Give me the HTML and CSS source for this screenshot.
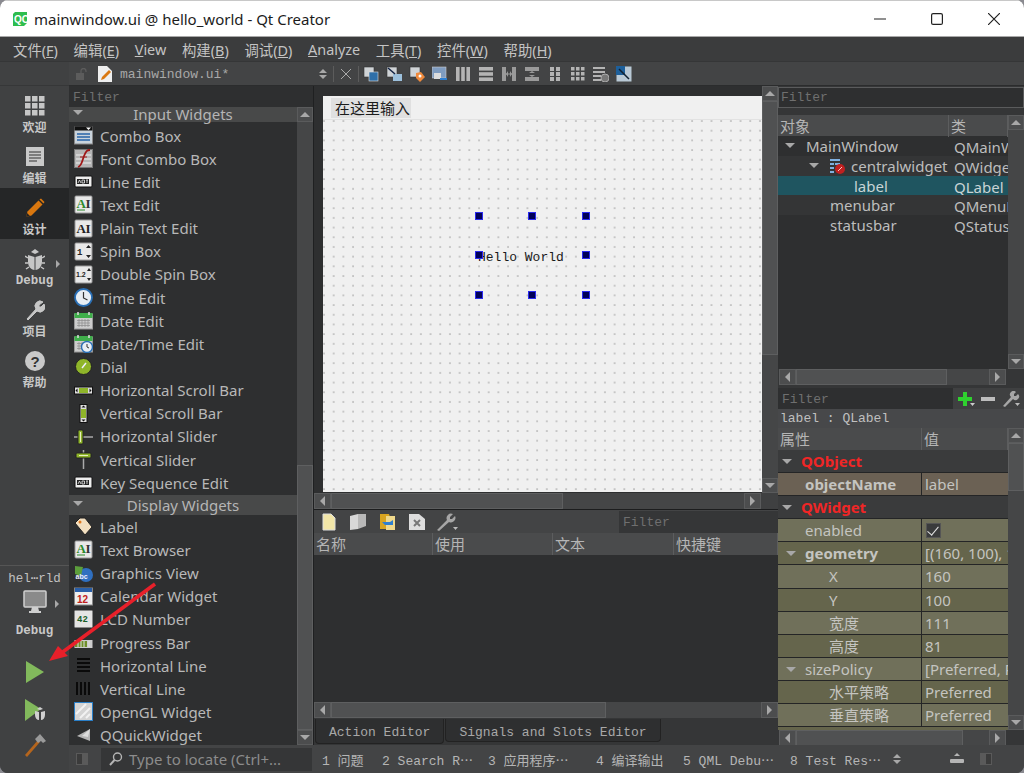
FILE: index.html
```html
<!DOCTYPE html>
<html lang="zh-CN">

<head>
  <meta charset="UTF-8">
  <title>mainwindow.ui @ hello_world - Qt Creator</title>
  <link rel="stylesheet" href="styles.css">
</head>

<body>
  <svg class="defs" aria-hidden="true">
    <symbol id="i-lineedit" viewBox="0 0 19 19">
      <rect x="1" y="4" width="17" height="11" rx="1" fill="#eee" stroke="#111"/>
      <rect x="3" y="7" width="12" height="5" fill="#222"/>
      <path d="M4 11l1.5-3 1.5 3M8 8h2.500v3H8zM12 8h2M13 8v3" stroke="#eee" fill="none" stroke-width=".8"/>
    </symbol>
    <symbol id="i-calendar" viewBox="0 0 19 19">
      <rect x="0.500" y="3" width="18" height="15" fill="#ccc" stroke="#999"/>
      <rect x="0.500" y="2" width="18" height="5" fill="#3fae4a"/>
      <path d="M3 9.500h13M3 12h13M3 14.500h13M5 8v8M8 8v8M11 8v8M14 8v8" stroke="#8a8a8a" stroke-width=".7"/>
      <path d="M4 1v3M15 1v3" stroke="#ddd" stroke-width="1.500"/>
    </symbol>
    <symbol id="i-slider-bar" viewBox="0 0 19 19">
      <rect x="0.500" y="6" width="18" height="7" fill="#ddd" stroke="#111"/>
      <rect x="5" y="7" width="9" height="5" fill="#8fb52a"/>
      <path d="M1.500 9.500l2-2v4zM17.500 9.500l-2-2v4z" fill="#111"/>
    </symbol>
    <symbol id="i-sheet" viewBox="0 0 16 16">
      <rect x="1" y="1" width="10" height="10" fill="#cfd3d6" stroke="#333" stroke-width=".6"/>
    </symbol>
  </svg>

  <div class="window">
    <header class="titlebar">
      <svg class="qt-logo" viewBox="0 0 16 16" width="16" height="16">
        <path d="M3 1h12v11l-3 3H1V3z" fill="#2ebd4e"/>
        <text x="2" y="11.500" class="svg-logo" fill="#fff">QC</text>
      </svg>
      <span class="title">mainwindow.ui @ hello_world - Qt Creator</span>
      <div class="caption">
        <svg viewBox="0 0 12 12" width="12" height="12"><path d="M0 6h12" stroke="#222" stroke-width="1.200"/></svg>
        <svg viewBox="0 0 12 12" width="12" height="12"><rect x="0.600" y="0.600" width="10.800" height="10.800" rx="1.500" fill="none" stroke="#222" stroke-width="1.200"/></svg>
        <svg viewBox="0 0 12 12" width="12" height="12"><path d="M0 0l12 12M12 0L0 12" stroke="#222" stroke-width="1.200"/></svg>
      </div>
    </header>

    <nav class="menubar">
      <span>文件(<u>F</u>)</span>
      <span>编辑(<u>E</u>)</span>
      <span><u>V</u>iew</span>
      <span>构建(<u>B</u>)</span>
      <span>调试(<u>D</u>)</span>
      <span><u>A</u>nalyze</span>
      <span>工具(<u>T</u>)</span>
      <span>控件(<u>W</u>)</span>
      <span>帮助(<u>H</u>)</span>
    </nav>

    <div class="workspace">
      <aside class="modebar">
        <div class="mode-spacer"></div>
        <div class="mode">
          <svg viewBox="0 0 20 20" width="20" height="20" fill="#c6c6c6">
            <rect x="0" y="0" width="5.500" height="5.500"/><rect x="7" y="0" width="5.500" height="5.500"/><rect x="14" y="0" width="5.500" height="5.500"/>
            <rect x="0" y="7" width="5.500" height="5.500"/><rect x="7" y="7" width="5.500" height="5.500"/><rect x="14" y="7" width="5.500" height="5.500"/>
            <rect x="0" y="14" width="5.500" height="5.500"/><rect x="7" y="14" width="5.500" height="5.500"/><rect x="14" y="14" width="5.500" height="5.500"/>
          </svg>
          <span>欢迎</span>
        </div>
        <div class="mode">
          <svg viewBox="0 0 20 20" width="20" height="20">
            <rect x="1" y="0" width="18" height="19" fill="#c9c9c9"/>
            <path d="M4 5h12M4 8h12M4 11h12M4 14h8" stroke="#333" stroke-width="1.200"/>
          </svg>
          <span>编辑</span>
        </div>
        <div class="mode active">
          <svg viewBox="0 0 20 20" width="20" height="20">
            <path d="M1 19l1.500-5.500L13.500 2.500l4 4L6.500 17.500z" fill="#d9770f"/>
            <path d="M14.500 1.500l1.500-1 3.500 3.500-1 1.500z" fill="#d9770f"/>
            <path d="M1 19l1-4 3 3z" fill="#222"/>
          </svg>
          <span>设计</span>
        </div>
        <div class="mode">
          <svg viewBox="0 0 20 22" width="20" height="22" fill="#c6c6c6">
            <path d="M6 3l4-3 4 3-4 2z"/>
            <path d="M3 6l6.500 2v13C6 21 3 17 3 13zM17 6l-6.500 2v13c3.500 0 6.500-4 6.500-8z"/>
            <path d="M3 9L0 7M3 14H0M4 18l-3 2M17 9l3-2M17 14h3M16 18l3 2" stroke="#c6c6c6" stroke-width="1.500"/>
          </svg>
          <i class="tri-right mode-arrow"></i>
          <span class="mono-label">Debug</span>
        </div>
        <div class="mode">
          <svg viewBox="0 0 20 20" width="20" height="20">
            <path d="M2 19l9-10a5 5 0 0 1 7-7l-4 3v2h2l3-3a5 5 0 0 1-7 7L3 20z" fill="#c6c6c6" stroke="#c6c6c6"/>
          </svg>
          <span>项目</span>
        </div>
        <div class="mode">
          <svg viewBox="0 0 20 20" width="20" height="20">
            <circle cx="10" cy="10" r="10" fill="#c9c9c9"/>
            <text x="10" y="15.500" class="svg-help" fill="#333">?</text>
          </svg>
          <span>帮助</span>
        </div>
        <div class="mode-fill"></div>
        <div class="kit">
          <div class="kit-name">hel⋯rld</div>
          <div class="kit-icon">
            <svg viewBox="0 0 24 24" width="24" height="24">
              <rect x="1" y="1" width="22" height="16" rx="1" fill="#8a8a8a" stroke="#cfcfcf" stroke-width="1.500"/>
              <path d="M9 17h6l1 4H8z M6 21h12v2H6z" fill="#cfcfcf"/>
            </svg>
            <i class="tri-right kit-arrow"></i>
          </div>
          <div class="mono-label">Debug</div>
        </div>
        <div class="run-btn">
          <svg viewBox="0 0 18 22" width="18" height="22"><path d="M0 0l18 11L0 22z" fill="#82b95c"/></svg>
        </div>
        <div class="run-btn">
          <svg viewBox="0 0 20 22" width="20" height="22">
            <path d="M0 0l16 10L0 22z" fill="#82b95c"/>
            <path d="M12 10l3-2 3 2-3 1zM10 12l4 1v8c-2 0-4-2-4-5zM20 12l-4 1v8c2 0 4-2 4-5z" fill="#d0d0d0"/>
          </svg>
        </div>
        <div class="run-btn build-btn">
          <svg viewBox="0 0 24 24" width="24" height="24">
            <path d="M2 22l13-15 2 2L4 24z" fill="#b5651d"/>
            <path d="M12 6l5-5 6 7-3 2-2-2-3 2z" fill="#9a9a9a"/>
          </svg>
        </div>
      </aside>

      <div class="main">
        <div class="toolbar">
          <div class="toolbar-file">
            <svg class="lock" viewBox="0 0 12 12" width="12" height="12">
              <rect x="0" y="5" width="8" height="7" fill="#5c5c5c"/>
              <path d="M5 5V3a2.500 2.500 0 0 1 5 0v1" fill="none" stroke="#5c5c5c" stroke-width="1.300"/>
            </svg>
            <svg viewBox="0 0 14 16" width="14" height="16">
              <path d="M0 0h9l5 5v11H0z" fill="#eee"/>
              <path d="M3 14l1-3 7-7 2 2-7 7z" fill="#d9770f"/>
            </svg>
            <span class="mono file-name">mainwindow.ui*</span>
          </div>
          <div class="toolbar-actions">
            <span class="updown"><i class="tri-up"></i><i class="tri-down"></i></span>
            <span class="sep"></span>
            <svg class="close-doc" viewBox="0 0 10 10" width="10" height="10"><path d="M0 0l10 10M10 0L0 10" stroke="#aaa"/></svg>
            <span class="sep sep-last"></span>
            <div class="tool-icons">
              <svg viewBox="0 0 16 16" width="16" height="16"><use href="#i-sheet"/><rect x="6" y="6" width="9" height="9" fill="#2f6fa8" stroke="#ddd" stroke-width=".6"/></svg>
              <svg viewBox="0 0 16 16" width="16" height="16"><use href="#i-sheet"/><rect x="7" y="8" width="9" height="7" fill="#9cc0dc"/><path d="M2 2l7 6" stroke="#124" stroke-width="1.500"/></svg>
              <svg viewBox="0 0 16 16" width="16" height="16"><use href="#i-sheet"/><path d="M7 7l5-1 4 5-5 5-4-4z" fill="#f08a3c"/><circle cx="11" cy="10" r="1.500" fill="#fff"/></svg>
              <svg viewBox="0 0 16 16" width="16" height="16"><rect x="0" y="1" width="14" height="11" fill="#7f9cc0" stroke="#ccc" stroke-width=".6"/><rect x="2" y="7" width="7" height="6" fill="#ddd"/><path d="M8 13h7" stroke="#2f7fd0" stroke-width="2"/></svg>
              <svg viewBox="0 0 16 16" width="16" height="16" fill="#b4b4b4"><rect x="1" y="1" width="3.600" height="14"/><rect x="6.200" y="1" width="3.600" height="14"/><rect x="11.400" y="1" width="3.600" height="14"/></svg>
              <svg viewBox="0 0 16 16" width="16" height="16" fill="#b4b4b4"><rect x="1" y="1" width="14" height="3.600"/><rect x="1" y="6.200" width="14" height="3.600"/><rect x="1" y="11.400" width="14" height="3.600"/></svg>
              <svg viewBox="0 0 16 16" width="16" height="16" fill="#9a9a9a"><rect x="1" y="1" width="4" height="14"/><rect x="11" y="1" width="4" height="14"/><path d="M5 8l2-3v6zM11 8L9 5v6z"/><path d="M5 8h6" stroke="#9a9a9a"/></svg>
              <svg viewBox="0 0 16 16" width="16" height="16" fill="#9a9a9a"><rect x="1" y="1" width="14" height="4"/><rect x="1" y="11" width="14" height="4"/><path d="M8 5L5 7h6zM8 11L5 9h6z"/></svg>
              <svg viewBox="0 0 16 16" width="16" height="16" fill="#b4b4b4"><rect x="3" y="1" width="4" height="4"/><rect x="9" y="1" width="4" height="4"/><rect x="3" y="6" width="4" height="4"/><rect x="9" y="6" width="4" height="4"/><rect x="3" y="11" width="4" height="4"/><rect x="9" y="11" width="4" height="4"/></svg>
              <svg viewBox="0 0 16 16" width="16" height="16" fill="#b4b4b4"><rect x="1" y="1" width="3.500" height="3.500"/><rect x="6" y="1" width="3.500" height="3.500"/><rect x="11" y="1" width="3.500" height="3.500"/><rect x="1" y="6" width="3.500" height="3.500"/><rect x="6" y="6" width="3.500" height="3.500"/><rect x="11" y="6" width="3.500" height="3.500"/><rect x="1" y="11" width="3.500" height="3.500"/><rect x="6" y="11" width="3.500" height="3.500"/><rect x="11" y="11" width="3.500" height="3.500"/></svg>
              <svg viewBox="0 0 16 16" width="16" height="16"><path d="M0 2h12M0 6h12M0 10h8M0 14h8" stroke="#b4b4b4" stroke-width="2"/><circle cx="12" cy="12" r="4" fill="#777" stroke="#aaa"/></svg>
              <svg viewBox="0 0 16 16" width="16" height="16"><rect x="0.500" y="0.500" width="15" height="15" fill="#b9c9d6"/><path d="M0 0h9v9H0z" fill="#1d5f9a"/><path d="M3 3l10 10" stroke="#123" stroke-width="1.500"/></svg>
            </div>
          </div>
        </div>

        <div class="panels">
          <section class="widget-box">
            <div class="filter-field mono">Filter</div>
            <div class="widget-body">
              <div class="widget-list">
                <div class="category first"><i class="tri-down cat-arrow"></i>Input Widgets</div>
                <div class="widget-row">
                  <svg viewBox="0 0 19 19" width="19" height="19"><rect x="0.500" y="1" width="18" height="17" fill="#c9d3dc" stroke="#888"/><rect x="0.500" y="0.500" width="18" height="4" fill="#111"/><path d="M12 1.500h5l-2.500 2.500z" fill="#fff"/><path d="M3 8h13M3 11h13M3 14h13" stroke="#4f7fb5" stroke-width="2"/></svg>
                  Combo Box
                </div>
                <div class="widget-row">
                  <svg viewBox="0 0 19 19" width="19" height="19"><rect x="0.500" y="0.500" width="18" height="18" fill="#b5b5b5" stroke="#777"/><path d="M2 6h15M2 10h15M2 14h15" stroke="#eee"/><path d="M4 18c4-1 4-6 6-11s3-6 6-6" fill="none" stroke="#a01818" stroke-width="1.800"/><path d="M6 8h7" stroke="#a01818"/></svg>
                  Font Combo Box
                </div>
                <div class="widget-row"><svg width="19" height="19"><use href="#i-lineedit"/></svg>Line Edit</div>
                <div class="widget-row">
                  <svg viewBox="0 0 19 19" width="19" height="19"><rect x="1" y="1" width="17" height="17" rx="1" fill="#e8e8e8" stroke="#999"/><text x="2.500" y="13" class="svg-serif" fill="#2c8a2c">A</text><text x="11.500" y="13" class="svg-serif" fill="#333">I</text><path d="M3 15h8" stroke="#2c8a2c"/></svg>
                  Text Edit
                </div>
                <div class="widget-row">
                  <svg viewBox="0 0 19 19" width="19" height="19"><rect x="1" y="1" width="17" height="17" rx="1" fill="#e8e8e8" stroke="#999"/><text x="2.500" y="14" class="svg-serif" fill="#222">A</text><text x="11.500" y="14" class="svg-serif" fill="#222">I</text></svg>
                  Plain Text Edit
                </div>
                <div class="widget-row">
                  <svg viewBox="0 0 19 19" width="19" height="19"><rect x="1" y="1" width="17" height="17" rx="1" fill="#e8e8e8" stroke="#999"/><text x="3" y="13" class="svg-small" fill="#222">1</text><path d="M12 6l2.500-3L17 6zM12 13l2.500 3 2.500-3z" fill="#222"/></svg>
                  Spin Box
                </div>
                <div class="widget-row">
                  <svg viewBox="0 0 19 19" width="19" height="19"><rect x="1" y="1" width="17" height="17" rx="1" fill="#e8e8e8" stroke="#999"/><text x="2" y="12" class="svg-tiny" fill="#222">1.2</text><path d="M13 6l2-3 2 3zM13 13l2 3 2-3z" fill="#222"/></svg>
                  Double Spin Box
                </div>
                <div class="widget-row">
                  <svg viewBox="0 0 19 19" width="19" height="19"><circle cx="9.500" cy="9.500" r="8.500" fill="#e8eef4" stroke="#2a6fb5" stroke-width="1.800"/><path d="M9.500 4v6l4 2" fill="none" stroke="#333" stroke-width="1.200"/></svg>
                  Time Edit
                </div>
                <div class="widget-row"><svg width="19" height="19"><use href="#i-calendar"/></svg>Date Edit</div>
                <div class="widget-row">
                  <svg viewBox="0 0 19 19" width="19" height="19"><use href="#i-calendar"/><circle cx="13" cy="13" r="5.500" fill="#e8eef4" stroke="#2a6fb5" stroke-width="1.400"/><path d="M13 10v3l2 1" fill="none" stroke="#333"/></svg>
                  Date/Time Edit
                </div>
                <div class="widget-row">
                  <svg viewBox="0 0 19 19" width="19" height="19"><circle cx="9.500" cy="9.500" r="8" fill="#8fb52a" stroke="#222"/><path d="M8 11l4-5" stroke="#eef" stroke-width="1.500"/></svg>
                  Dial
                </div>
                <div class="widget-row"><svg width="19" height="19"><use href="#i-slider-bar"/></svg>Horizontal Scroll Bar</div>
                <div class="widget-row">
                  <svg viewBox="0 0 19 19" width="19" height="19"><rect x="6" y="0.500" width="7" height="18" fill="#ddd" stroke="#111"/><rect x="7" y="5" width="5" height="9" fill="#8fb52a"/><path d="M9.500 1.500l-2 2h4zM9.500 17.500l-2-2h4z" fill="#111"/></svg>
                  Vertical Scroll Bar
                </div>
                <div class="widget-row">
                  <svg viewBox="0 0 19 19" width="19" height="19"><path d="M0 10h19" stroke="#aaa" stroke-width="1.500"/><rect x="4" y="3" width="5" height="14" rx="1" fill="#8fb52a" stroke="#222"/><path d="M6.500 5v10" stroke="#e8f0c0"/></svg>
                  Horizontal Slider
                </div>
                <div class="widget-row">
                  <svg viewBox="0 0 19 19" width="19" height="19"><path d="M9.500 0v19" stroke="#aaa" stroke-width="1.500"/><rect x="2" y="3" width="15" height="5" rx="1" fill="#8fb52a" stroke="#222"/><path d="M5 5.500h9" stroke="#e8f0c0"/></svg>
                  Vertical Slider
                </div>
                <div class="widget-row"><svg width="19" height="19"><use href="#i-lineedit"/></svg>Key Sequence Edit</div>
                <div class="category"><i class="tri-down cat-arrow"></i>Display Widgets</div>
                <div class="widget-row">
                  <svg viewBox="0 0 19 19" width="19" height="19"><path d="M1 6l5-5h5l7 9-7 8z" fill="#f2dfc0" stroke="#222"/><circle cx="6" cy="5" r="1.500" fill="#e07a20"/></svg>
                  Label
                </div>
                <div class="widget-row">
                  <svg viewBox="0 0 19 19" width="19" height="19"><rect x="1" y="1" width="17" height="17" rx="1" fill="#e8e8e8" stroke="#999"/><text x="2.500" y="13" class="svg-serif" fill="#2c8a2c">A</text><text x="11.500" y="13" class="svg-serif" fill="#333">I</text><path d="M3 15h8" stroke="#2c8a2c"/></svg>
                  Text Browser
                </div>
                <div class="widget-row">
                  <svg viewBox="0 0 19 19" width="19" height="19"><circle cx="12" cy="11" r="7" fill="#2f6fc0"/><path d="M1 2l8 1-2 9-6-2z" fill="#5c9e3c"/><text x="1.500" y="15" class="svg-tiny" fill="#eef">abc</text></svg>
                  Graphics View
                </div>
                <div class="widget-row">
                  <svg viewBox="0 0 19 19" width="19" height="19"><rect x="0.500" y="1" width="18" height="17" fill="#eee" stroke="#888"/><rect x="1" y="1" width="17" height="4" fill="#2a5fa8"/><text x="3" y="15.500" class="svg-cal" fill="#c02020">12</text></svg>
                  Calendar Widget
                </div>
                <div class="widget-row">
                  <svg viewBox="0 0 19 19" width="19" height="19"><rect x="0.500" y="0.500" width="18" height="17" rx="1" fill="#e4e4e4" stroke="#888"/><text x="3" y="12" class="svg-small" fill="#1a5f2a">42</text></svg>
                  LCD Number
                </div>
                <div class="widget-row">
                  <svg viewBox="0 0 19 19" width="19" height="19"><rect x="0.500" y="7" width="18" height="8" fill="#ccc"/><rect x="1" y="8" width="12" height="6" fill="#6f8f2a"/><path d="M4 8v6M7 8v6M10 8v6M15 8v6" stroke="#ddd"/></svg>
                  Progress Bar
                </div>
                <div class="widget-row">
                  <svg viewBox="0 0 19 19" width="19" height="19"><path d="M3 3h13M3 7h13M3 11h13M3 15h13" stroke="#0a0a0a" stroke-width="2"/></svg>
                  Horizontal Line
                </div>
                <div class="widget-row">
                  <svg viewBox="0 0 19 19" width="19" height="19"><path d="M3 3v13M7 3v13M11 3v13M15 3v13" stroke="#0a0a0a" stroke-width="2"/></svg>
                  Vertical Line
                </div>
                <div class="widget-row">
                  <svg viewBox="0 0 19 19" width="19" height="19"><rect x="0.500" y="0.500" width="18" height="18" fill="#d4d4d4" stroke="#2a7fc8"/><path d="M2 12L12 2M6 16L16 6M12 16l4-4" stroke="#f2f2f2" stroke-width="2"/></svg>
                  OpenGL Widget
                </div>
                <div class="widget-row">
                  <svg viewBox="0 0 19 19" width="19" height="19"><path d="M3 10L16 3v12z" fill="#b5b5b5"/><path d="M8 10l8-7-2 8z" fill="#ddd"/></svg>
                  QQuickWidget
                </div>
              </div>
              <div class="vbar">
                <div class="sb-btn"><i class="tri-up"></i></div>
                <div class="sb-track"></div>
                <div class="sb-thumb list-thumb"></div>
                <div class="sb-btn"><i class="tri-down"></i></div>
              </div>
            </div>
          </section>

          <section class="center">
            <div class="form-top">
              <div class="form-view">
                <div class="canvas">
                  <div class="canvas-menubar"><span class="canvas-menu">在这里输入</span></div>
                  <div class="canvas-grid"></div>
                  <span class="hello mono">Hello World</span>
                  <i class="handle h-tl"></i><i class="handle h-tc"></i><i class="handle h-tr"></i>
                  <i class="handle h-ml"></i><i class="handle h-mr"></i>
                  <i class="handle h-bl"></i><i class="handle h-bc"></i><i class="handle h-br"></i>
                </div>
              </div>
              <div class="vbar">
                <div class="sb-btn"><i class="tri-up"></i></div>
                <div class="sb-thumb form-thumb"></div>
                <div class="sb-track"></div>
                <div class="sb-btn"><i class="tri-down"></i></div>
              </div>
            </div>
            <div class="hbar form-hbar">
              <div class="sb-btn"><i class="tri-left"></i></div>
              <div class="sb-thumb" style="width: 232px"></div>
              <div class="sb-track"></div>
              <div class="sb-btn"><i class="tri-right"></i></div>
            </div>

            <div class="action-bar">
              <div class="action-icons">
                <svg viewBox="0 0 14 18" width="14" height="18"><path d="M1 1h8l4 4v12H1z" fill="#f2e6a8" stroke="#ddd"/></svg>
                <svg viewBox="0 0 18 18" width="18" height="18"><path d="M1 3l8-2v15l-8 1z" fill="#d8d8d8"/><path d="M9 1h8v12l-8 3z" fill="#b8b8b8"/></svg>
                <svg viewBox="0 0 16 18" width="16" height="18"><path d="M0 1h9l1 3v12H0z" fill="#d9a520"/><path d="M6 3h9v14H6z" fill="#f0d98c"/><path d="M2 9h8l3-2v5H5z" fill="#2f7fd0"/></svg>
                <svg viewBox="0 0 16 18" width="16" height="18"><path d="M0 1h10l6 5v11H0z" fill="#ddd"/><path d="M5 7l6 6M11 7l-6 6" stroke="#777" stroke-width="2"/></svg>
                <svg class="action-wrench" viewBox="0 0 22 18" width="22" height="18"><path d="M1 17l10-10a4.500 4.500 0 0 1 6-6l-3 3v2h2l3-3a4.500 4.500 0 0 1-6 6L3 18z" fill="#a6a6a6"/><path d="M17 14h5l-2.500 3z" fill="#bbb"/></svg>
              </div>
              <div class="filter-field mono action-filter">Filter</div>
            </div>
            <div class="head-row action-head">
              <span>名称</span><span>使用</span><span>文本</span><span>快捷键</span>
            </div>
            <div class="action-list"></div>
            <div class="hbar">
              <div class="sb-btn"><i class="tri-left"></i></div>
              <div class="sb-thumb" style="width: 275px"></div>
              <div class="sb-track"></div>
              <div class="sb-btn"><i class="tri-right"></i></div>
            </div>
            <div class="tabs">
              <span class="tab active mono">Action Editor</span>
              <span class="tab mono">Signals and Slots Editor</span>
            </div>
          </section>

          <section class="side">
            <div class="filter-field mono outlined">Filter</div>
            <div class="tree-wrap">
              <div class="tree-main">
                <div class="head-row tree-head"><span>对象</span><span>类</span></div>
                <div class="tree">
                  <div class="tree-row"><span class="tree-name indent-0"><i class="tri-down"></i>MainWindow</span><span class="tree-class">QMainWindow</span></div>
                  <div class="tree-row alt"><span class="tree-name indent-1"><i class="tri-down"></i>
                    <svg viewBox="0 0 16 16" width="16" height="16"><path d="M1 1h10v2H1zM1 5h4v2H1zM6 5h5v2H6zM1 9h4v2H1zM1 13h4v2H1z" fill="#7fb0e0"/><circle cx="11" cy="11" r="5" fill="#c02020"/><path d="M9 13l4-4" stroke="#f8c8c8"/></svg>
                    centralwidget</span><span class="tree-class">QWidget</span></div>
                  <div class="tree-row selected"><span class="tree-name indent-2">label</span><span class="tree-class">QLabel</span></div>
                  <div class="tree-row alt"><span class="tree-name indent-3">menubar</span><span class="tree-class">QMenuBar</span></div>
                  <div class="tree-row"><span class="tree-name indent-3">statusbar</span><span class="tree-class">QStatusBar</span></div>
                </div>
              </div>
              <div class="vbar">
                <div class="sb-btn"><i class="tri-up"></i></div>
                <div class="sb-track"></div>
                <div class="sb-btn"><i class="tri-down"></i></div>
              </div>
            </div>
            <div class="hbar side-hbar">
              <div class="sb-btn"><i class="tri-left"></i></div>
              <div class="sb-thumb" style="width: 151px"></div>
              <div class="sb-track"></div>
              <div class="sb-btn"><i class="tri-right"></i></div>
            </div>

            <div class="prop-filter">
              <div class="filter-field mono">Filter</div>
              <svg class="prop-add" viewBox="0 0 18 14" width="18" height="14"><path d="M6 0h4v5h5v4h-5v5H6V9H1V5h5z" fill="#2fd02f"/><path d="M13 11h5l-2.500 3z" fill="#ccc"/></svg>
              <svg class="prop-remove" viewBox="0 0 14 14" width="14" height="14"><rect x="0" y="5" width="14" height="4" fill="#bdbdbd"/></svg>
              <svg class="prop-tool" viewBox="0 0 18 16" width="18" height="16"><path d="M1 15l8-9a3.500 3.500 0 0 1 5-5l-2 2v2h2l2-2a3.500 3.500 0 0 1-5 5l-8 8z" fill="#a6a6a6"/><path d="M13 12h5l-2.500 3z" fill="#bbb"/></svg>
            </div>
            <div class="object-name mono">label : QLabel</div>
            <div class="prop-wrap">
              <div class="prop-main">
                <div class="head-row prop-head"><span>属性</span><span>值</span></div>
                <div class="prop-group"><i class="tri-down"></i>QObject</div>
                <div class="prop-row brown"><span class="pad-1 strong">objectName</span><span>label</span></div>
                <div class="prop-group"><i class="tri-down"></i>QWidget</div>
                <div class="prop-row olive"><span class="pad-1">enabled</span><span><i class="check"></i></span></div>
                <div class="prop-row olive-dark"><span class="pad-1 strong"><i class="tri-down prop-arrow"></i>geometry</span><span class="clip">[(160, 100), 111 x 81]</span></div>
                <div class="prop-row olive"><span class="pad-2">X</span><span>160</span></div>
                <div class="prop-row olive-dark"><span class="pad-2">Y</span><span>100</span></div>
                <div class="prop-row olive"><span class="pad-2">宽度</span><span>111</span></div>
                <div class="prop-row olive-dark"><span class="pad-2">高度</span><span>81</span></div>
                <div class="prop-row olive"><span class="pad-1"><i class="tri-down prop-arrow"></i>sizePolicy</span><span class="clip">[Preferred, Preferred, 0, 0]</span></div>
                <div class="prop-row olive-dark"><span class="pad-2">水平策略</span><span>Preferred</span></div>
                <div class="prop-row olive"><span class="pad-2">垂直策略</span><span>Preferred</span></div>
                <div class="prop-row olive-dark prop-cut"></div>
              </div>
              <div class="vbar">
                <div class="sb-btn"><i class="tri-up"></i></div>
                <div class="sb-thumb prop-thumb"></div>
                <div class="sb-track"></div>
                <div class="sb-btn"><i class="tri-down"></i></div>
              </div>
            </div>
            <div class="hbar side-hbar">
              <div class="sb-btn"><i class="tri-left"></i></div>
              <div class="sb-thumb" style="width: 167px"></div>
              <div class="sb-track"></div>
              <div class="sb-btn"><i class="tri-right"></i></div>
            </div>
          </section>
        </div>

        <footer class="statusbar">
          <svg class="toggle" viewBox="0 0 12 12" width="12" height="12"><rect x="0.500" y="0.500" width="11" height="11" fill="#5a5a5a" stroke="#5a5a5a"/><rect x="1" y="1" width="5" height="10" fill="#3b3b3b"/></svg>
          <div class="locator">
            <svg viewBox="0 0 14 14" width="14" height="14"><circle cx="8.500" cy="5" r="4" fill="none" stroke="#b5b5b5" stroke-width="1.400"/><path d="M5.500 8L1 13" stroke="#b5b5b5" stroke-width="2"/></svg>
            Type to locate (Ctrl+...
          </div>
          <div class="out-tabs mono">
            <span class="w-1">1 问题</span>
            <span class="w-2">2 Search R⋯</span>
            <span class="w-3">3 应用程序⋯</span>
            <span class="w-4">4 编译输出</span>
            <span class="w-5">5 QML Debu⋯</span>
            <span class="w-6">8 Test Res⋯</span>
          </div>
          <span class="updown status-updown"><i class="tri-up"></i><i class="tri-down"></i></span>
          <svg class="status-tool" viewBox="0 0 14 12" width="14" height="12"><rect x="0" y="6" width="14" height="4" rx="1" fill="#b5b5b5"/><path d="M7 0l3 3H4z" fill="#b5b5b5"/></svg>
          <svg class="status-side" viewBox="0 0 12 12" width="12" height="12"><rect x="0.500" y="0.500" width="11" height="11" fill="#5a5a5a" stroke="#5a5a5a"/><rect x="6" y="1" width="5" height="10" fill="#3b3b3b"/></svg>
        </footer>
      </div>
    </div>
  </div>

  <svg class="red-arrow" viewBox="0 0 120 100" width="120" height="100">
    <path d="M115 10L20 80" stroke="#e8202a" stroke-width="3.500" fill="none"/>
    <path d="M9 87l9-15 10 10z" fill="#e8202a"/>
  </svg>
</body>

</html>
```

FILE: styles.css
```css
* {
  box-sizing: border-box;
}

html,
body {
  margin: 0;
  height: 100%;
  overflow: hidden;
  background: #8a8a90;
}

body {
  position: relative;
  width: 1024px;
  height: 773px;
  font-family: "Noto Sans", "Noto Sans CJK SC", sans-serif;
  font-size: 15px;
  color: #bdbdbd;
}

.defs {
  position: absolute;
  width: 0;
  height: 0;
}

.mono {
  font-family: "Liberation Mono", "Noto Sans CJK SC", monospace;
  font-size: 13px;
}

.svg-serif {
  font: 700 13px "Liberation Serif", serif;
}

.svg-logo {
  font: 700 10px "Liberation Sans", sans-serif;
}

.svg-help {
  font: 700 15px "Liberation Sans", sans-serif;
  text-anchor: middle;
}

.svg-small {
  font: 700 9px "Liberation Mono", monospace;
}

.svg-tiny {
  font: 700 7px "Liberation Sans", sans-serif;
}

.svg-cal {
  font: 700 10px "Liberation Sans", sans-serif;
}

/* triangles */
.tri-up,
.tri-down,
.tri-left,
.tri-right {
  display: inline-block;
  width: 0;
  height: 0;
  border-style: solid;
  border-color: transparent;
}

.tri-up {
  border-width: 0 5px 5px;
  border-bottom-color: #a8a8a8;
}

.tri-down {
  border-width: 5px 5px 0;
  border-top-color: #a8a8a8;
}

.tri-left {
  border-width: 5px 5px 5px 0;
  border-right-color: #a8a8a8;
}

.tri-right {
  border-width: 5px 0 5px 5px;
  border-left-color: #a8a8a8;
}

.window {
  display: flex;
  flex-direction: column;
  width: 1024px;
  height: 773px;
  border-radius: 8px;
  overflow: hidden;
  background: #3f4041;
}

.titlebar {
  display: flex;
  align-items: center;
  flex: 0 0 37px;
  padding: 0 24px 0 12px;
  background: #fff;
  border-top: 1px solid #c8c8c8;
  border-bottom: 1px solid #a8a8a8;
  color: #1c1c1c;
}

.qt-logo {
  flex: none;
  margin-right: 6px;
}

.title {
  flex: 1;
  font-size: 15px;
}

.caption {
  display: flex;
  gap: 45px;
}

.menubar {
  display: flex;
  align-items: center;
  gap: 15.7px;
  flex: 0 0 25px;
  padding: 0 0 0 13px;
  background: #3b3c3d;
  border-bottom: 1px solid #353637;
  color: #c4c4c4;
  font-size: 14.4px;
}

.workspace {
  flex: 1;
  display: flex;
  min-height: 0;
}

.modebar {
  display: flex;
  flex-direction: column;
  flex: 0 0 69px;
  background: #404142;
  color: #c8c8c8;
}

.mode-spacer {
  flex: 0 0 24px;
  border-bottom: 1px solid #363738;
}

.mode {
  position: relative;
  display: flex;
  flex-direction: column;
  align-items: center;
  flex: 0 0 51px;
  padding-top: 10px;
  font-size: 12px;
  font-weight: 700;
  line-height: 17px;
}

.mode svg {
  flex: none;
  margin-bottom: 3px;
}

.mode.active {
  background: #252627;
}

.mono-label {
  font-family: "Liberation Mono", monospace;
  font-size: 12.5px;
  line-height: 15px;
  font-weight: 700;
}

.mode-arrow {
  position: absolute;
  top: 21px;
  right: 9px;
  border-width: 4px 0 4px 4px;
}

.mode-fill {
  flex: 1;
}

.kit {
  display: flex;
  flex-direction: column;
  align-items: center;
  padding-top: 5px;
  height: 88px;
  border-top: 1px solid #555;
  color: #c8c8c8;
}

.kit-name {
  font-family: "Liberation Mono", monospace;
  font-size: 12.5px;
  color: #c0c0c0;
  line-height: 16px;
  margin-bottom: 3px;
}

.kit-icon {
  position: relative;
  height: 26px;
  margin-bottom: 8px;
}

.kit-arrow {
  position: absolute;
  left: 32px;
  top: 10px;
  border-width: 4px 0 4px 4px;
}

.run-btn {
  display: flex;
  align-items: center;
  justify-content: center;
  flex: 0 0 38px;
}

.build-btn {
  flex: 0 0 32px;
  margin-bottom: 12px;
}

.main {
  flex: 1;
  min-width: 0;
  display: flex;
  flex-direction: column;
}

.toolbar {
  display: flex;
  align-items: center;
  flex: 0 0 24px;
  padding-top: 1px;
  background: #434445;
  border-bottom: 1px solid #2b2c2d;
}

.toolbar-file {
  display: flex;
  align-items: center;
  flex: 0 0 245px;
  padding-left: 7px;
}

.lock {
  margin-right: 10px;
}

.file-name {
  margin-left: 8px;
  color: #a8a8a8;
}

.toolbar-actions {
  display: flex;
  align-items: center;
  margin-left: 5px;
}

.updown {
  display: inline-flex;
  flex-direction: column;
  gap: 2px;
}

.updown .tri-up {
  border-width: 0 4px 4px;
}

.updown .tri-down {
  border-width: 4px 4px 0;
}

.sep {
  width: 1px;
  height: 16px;
  margin: 0 6px;
  background: #5c5c5c;
}

.sep-last {
  margin-right: 0;
}

.close-doc {
  margin: 0 1px;
}

.tool-icons {
  display: flex;
  gap: 7px;
  margin-left: 4px;
}

.panels {
  flex: 1;
  display: flex;
  min-height: 0;
}

.widget-box {
  display: flex;
  flex-direction: column;
  flex: 0 0 245px;
  border-right: 1px solid #1f2021;
}

.filter-field {
  background: #2e2f30;
  color: #6f6f6f;
  height: 21px;
  line-height: 23px;
  padding-left: 4px;
}

.widget-box > .filter-field {
  flex: none;
}

.widget-body {
  flex: 1;
  min-height: 0;
  display: flex;
}

.widget-list {
  flex: 1;
  overflow: hidden;
  background: #2e2f30;
}

.category {
  position: relative;
  height: 20px;
  margin-top: 1px;
  line-height: 20px;
  text-align: center;
  background: #484949;
  color: #b5b5b5;
}

.category.first {
  height: 15px;
  line-height: 14px;
  margin-top: 0;
  margin-bottom: 2px;
}

.cat-arrow {
  position: absolute;
  left: 4px;
  top: 6px;
}

.category.first .cat-arrow {
  top: 3px;
}

.widget-row {
  display: flex;
  align-items: center;
  gap: 7px;
  height: 23.15px;
  padding-left: 5px;
  white-space: nowrap;
  color: #b8b8b8;
}

.widget-row svg {
  flex: 0 0 19px;
}

/* scrollbars */
.vbar {
  display: flex;
  flex-direction: column;
  flex: 0 0 16px;
  background: #3f4041;
}

.hbar {
  display: flex;
  flex: 0 0 16px;
  background: #3f4041;
}

.sb-btn {
  display: flex;
  align-items: center;
  justify-content: center;
  flex: 0 0 15px;
  background: #4c4d4e;
  border: 1px solid #5a5b5c;
}

.hbar .sb-btn {
  flex-basis: 17px;
}

.sb-track {
  flex: 1;
  background: #454647;
}

.sb-thumb {
  flex: none;
  background: #505152;
  border: 1px solid #5e5f60;
}

.list-thumb {
  height: 265px;
}

.form-thumb {
  height: 254px;
}

.prop-thumb {
  height: 48px;
}

.center {
  display: flex;
  flex-direction: column;
  flex: 0 0 464px;
  background: #2e2f30;
}

.form-top {
  display: flex;
  flex: 0 0 407px;
}

.form-view {
  flex: 1;
  padding: 10px 0 0 9px;
  background: #2e2f30;
}

.canvas {
  position: relative;
  height: 396px;
  background: #f0f0f0;
  display: flex;
  flex-direction: column;
}

.canvas-menubar {
  flex: 0 0 24px;
  padding: 2px 0 0 8px;
  border-bottom: 1px solid #e2e2e2;
}

.canvas-menu {
  display: inline-block;
  width: 80px;
  height: 20px;
  line-height: 20px;
  padding-left: 4px;
  background: #e0e0e0;
  color: #1c1c1c;
  white-space: nowrap;
}

.canvas-grid {
  flex: 1;
  background-image: radial-gradient(circle at 1px 1px, #bcbcbc 0.6px, transparent 1px);
  background-size: 9.7px 9.7px;
}

.hello {
  position: absolute;
  left: 155px;
  top: 154px;
  color: #1a1a1a;
}

.handle {
  position: absolute;
  width: 6px;
  height: 6px;
  background: #000058;
  outline: 1px solid #2a2af0;
}

.h-tl, .h-ml, .h-bl { left: 153px; }
.h-tc, .h-bc { left: 206px; }
.h-tr, .h-mr, .h-br { left: 260px; }
.h-tl, .h-tc, .h-tr { top: 117px; }
.h-ml, .h-mr { top: 156px; }
.h-bl, .h-bc, .h-br { top: 196px; }

.form-hbar {
  flex-basis: 17px;
  border-bottom: 1px solid #1c1d1e;
  padding-right: 17px;
}

.action-bar {
  display: flex;
  align-items: center;
  justify-content: space-between;
  flex: 0 0 23px;
  background: #434445;
}

.action-icons {
  display: flex;
  align-items: center;
  gap: 13px;
  padding-left: 8px;
}

.action-wrench {
  margin-left: -2px;
}

.action-filter {
  width: 159px;
  height: 22px;
  background: #353637;
}

.head-row {
  display: grid;
  align-items: center;
  background: #4a4b4c;
  color: #b5b5b5;
}

.head-row span {
  height: 100%;
  padding-left: 2px;
  border-right: 1px solid #5c5d5e;
  line-height: 22px;
}

.action-head {
  grid-template-columns: 119px 120px 121px 1fr;
  flex: 0 0 22px;
}

.action-list {
  flex: 1;
  background: #2e2f30;
}

.tabs {
  display: flex;
  align-items: flex-start;
  gap: 1px;
  flex: 0 0 27px;
  padding: 1px 0 0 1px;
  background: #353637;
}

.tab {
  height: 23px;
  line-height: 27px;
  padding: 0 13px;
  border: 1px solid #222;
  border-top: 0;
  border-radius: 0 0 4px 4px;
  background: #2e2f30;
  color: #a8a8a8;
  white-space: nowrap;
}

.tab.active {
  height: 25px;
  line-height: 28px;
}

.side {
  display: flex;
  flex-direction: column;
  flex: 1;
  min-width: 0;
  background: #353637;
}

.outlined {
  flex: 0 0 21px;
  margin-top: 1px;
  border: 1px solid #5a5b5c;
  line-height: 20px;
  padding-left: 2px;
}

.tree-wrap {
  display: flex;
  flex: 0 0 254px;
  margin-top: 7px;
}

.tree-main {
  flex: 1;
  min-width: 0;
  background: #2e2f30;
}

.tree-head {
  grid-template-columns: 171px 1fr;
  height: 21px;
}

.tree-row {
  display: flex;
  height: 19.8px;
  line-height: 22px;
  white-space: nowrap;
  overflow: hidden;
}

.tree-row.alt {
  background: #343536;
}

.tree-row.selected {
  background: #1f5560;
  color: #c8d4d6;
}

.tree-name {
  display: flex;
  align-items: center;
  flex: 0 0 176px;
}

.indent-0 .tri-down {
  margin-right: 11px;
}

.indent-1 .tri-down {
  margin-right: 10px;
}

.tree-name svg {
  margin-right: 6px;
}

.indent-0 { padding-left: 7px; }
.indent-1 { padding-left: 31px; }
.indent-2 { padding-left: 76px; }
.indent-3 { padding-left: 52px; }

.tree-class {
  flex: 1;
  overflow: hidden;
}

.side-hbar {
  flex: 0 0 16px;
  padding-right: 18px;
  padding-left: 1px;
  background: #353637;
}

.prop-filter {
  display: flex;
  align-items: center;
  flex: 0 0 21px;
  margin-top: 3px;
  background: #3f4041;
}

.prop-filter .filter-field {
  flex: 0 0 175px;
}

.prop-add {
  margin-left: 4px;
}

.prop-remove {
  margin-left: 6px;
}

.prop-tool {
  margin-left: 7px;
}

.object-name {
  flex: 0 0 19px;
  line-height: 19px;
  padding-left: 2px;
  background: #47484a;
  color: #c0c0c0;
}

.prop-wrap {
  display: flex;
  flex: 0 0 302px;
}

.prop-main {
  flex: 1;
  min-width: 0;
  overflow: hidden;
}

.prop-head {
  grid-template-columns: 144px 1fr;
  height: 22px;
}

.prop-group {
  display: flex;
  align-items: center;
  height: 23.1px;
  padding-left: 4px;
  background: #3a3b3c;
  border-bottom: 1px solid #242526;
  color: #f02626;
  font-weight: 700;
}

.prop-group .tri-down {
  margin-right: 9px;
}

.prop-row {
  display: grid;
  grid-template-columns: 144px 1fr;
  height: 23.1px;
  line-height: 22px;
  border-bottom: 1px solid #242526;
  color: #c4c4c0;
  white-space: nowrap;
}

.prop-row > span {
  position: relative;
  overflow: hidden;
}

.prop-row > span:first-child {
  border-right: 1px solid #242526;
}

.prop-row > span:last-child {
  padding-left: 3px;
}

.brown { background: #6b6154; }
.olive { background: #70705a; }
.olive-dark { background: #65654c; }
.prop-cut { height: 3px; border: 0; }

.pad-1 { padding-left: 27px; }
.pad-2 { padding-left: 51px; }

.strong {
  font-weight: 700;
}

.prop-arrow {
  position: absolute;
  left: 8px;
  top: 9px;
}

.check {
  position: relative;
  display: inline-block;
  width: 15px;
  height: 15px;
  margin: 4px 0 0 1px;
  background: #3a3b3c;
  border: 1px solid #555;
}

.check::after {
  content: "";
  position: absolute;
  left: 3px;
  top: 0;
  width: 5px;
  height: 10px;
  border: solid #e4e4e4;
  border-width: 0 1.5px 1.5px 0;
  transform: rotate(40deg);
}

.statusbar {
  display: flex;
  align-items: center;
  flex: 0 0 28px;
  background: #434445;
}

.toggle {
  margin-left: 7px;
}

.locator {
  display: flex;
  align-items: center;
  gap: 6px;
  width: 211px;
  height: 23px;
  margin: 0 10px 0 13px;
  padding-left: 8px;
  background: #353637;
  color: #8c8c8c;
  white-space: nowrap;
}

.out-tabs {
  display: flex;
  width: 571px;
  white-space: nowrap;
  color: #b5b5b5;
}

.out-tabs span {
  flex: none;
}

.w-1 { width: 60px; }
.w-2 { width: 106px; }
.w-3 { width: 108px; }
.w-4 { width: 87px; }
.w-5 { width: 107px; }
.w-6 { width: 100px; }

.status-tool {
  margin-left: 49px;
}

.status-side {
  margin-left: 16px;
}

.red-arrow {
  position: absolute;
  left: 40px;
  top: 574px;
}
```
